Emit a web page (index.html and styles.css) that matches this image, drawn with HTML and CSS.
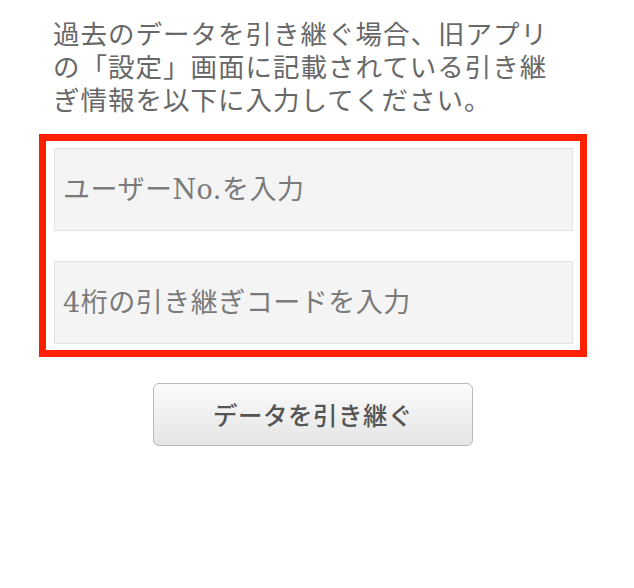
FILE: index.html
```html
<!DOCTYPE html>
<html lang="ja">
<head>
<meta charset="utf-8">
<link rel="stylesheet" href="styles.css">
</head>
<body>
<main class="page">
  <p class="intro">過去のデータを引き継ぐ場合、旧アプリの「設定」画面に記載されている引き継ぎ情報を以下に入力してください。</p>
  <div class="form-box">
    <input class="field" type="text" placeholder="ユーザーNo.を入力">
    <input class="field" type="text" placeholder="4桁の引き継ぎコードを入力">
  </div>
  <button class="submit" type="button">データを引き継ぐ</button>
</main>
</body>
</html>
```

FILE: styles.css
```css
html, body {
  margin: 0;
  padding: 0;
  background: #ffffff;
}

.page {
  display: flex;
  flex-direction: column;
  align-items: flex-start;
  padding: 16px 0 0 39px;
  font-family: "Noto Sans CJK JP", sans-serif;
}

.intro {
  margin: 0 0 0 14px;
  width: 505px;
  font-size: 26.5px;
  line-height: 33px;
  letter-spacing: 1px;
  color: #686868;
}

.form-box {
  margin-top: 19px;
  width: 548px;
  box-sizing: border-box;
  border: 7px solid #ff2000;
  padding: 7px 7px 6px 8px;
  display: flex;
  flex-direction: column;
  gap: 30px;
}

.field {
  display: block;
  width: 100%;
  height: 83px;
  box-sizing: border-box;
  margin: 0;
  padding: 0 0 0 8px;
  border: 1px solid #e3e3e3;
  background: #f4f4f4;
  border-radius: 0;
  outline: none;
  font-family: "DejaVu Serif", "Noto Sans CJK JP", sans-serif;
  font-size: 27px;
  letter-spacing: 0.5px;
  color: #777777;
}

.field::placeholder {
  color: #7a7a7a;
  opacity: 1;
}

.submit {
  margin: 26px 0 0 114px;
  width: 320px;
  height: 63px;
  box-sizing: border-box;
  border: 1px solid #b9b9b9;
  border-radius: 6px;
  background: linear-gradient(#fbfbfb, #e5e5e5);
  font-family: "Noto Sans CJK JP", sans-serif;
  font-size: 24.5px;
  font-weight: 500;
  letter-spacing: 0.5px;
  color: #555555;
  padding: 0;
}
```
